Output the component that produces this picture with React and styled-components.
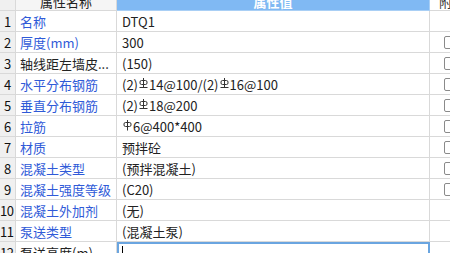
import React from "react";
import styled, { createGlobalStyle } from "styled-components";

const Global = createGlobalStyle`
  html, body { margin: 0; padding: 0; background: #fff; overflow: hidden; }
  body { font-family: "Noto Sans CJK SC", "Noto Sans", "Liberation Sans", sans-serif; }
`;

const Viewport = styled.div`
  width: 450px;
  height: 253px;
  overflow: hidden;
`;

const Table = styled.div`
  display: grid;
  grid-template-columns: 16px 101px 313px 40px;
  grid-auto-rows: 21px;
  width: 470px;
  margin-top: -10px;
  font-size: 13px;
`;

const HeadCell = styled.div`
  display: flex;
  align-items: center;
  justify-content: ${(p) => (p.$left ? "flex-start" : "center")};
  padding-left: ${(p) => (p.$left ? "9px" : "0")};
  background: ${(p) => p.$bg};
  color: ${(p) => p.$color};
  font-weight: ${(p) => (p.$bold ? 700 : 400)};
  border-right: 1px solid ${(p) => p.$line || "#d9d9d9"};
  border-bottom: 1px solid ${(p) => p.$line || "#d9d9d9"};
  box-sizing: border-box;
  line-height: 1;
  padding-top: 3px;
`;

const NumCell = styled.div`
  background: #f0f0f0;
  border-right: 1px solid #d9d9d9;
  border-bottom: 1px solid #d9d9d9;
  box-sizing: border-box;
  color: #111;
  display: flex;
  align-items: center;
  justify-content: ${(p) => (p.$wide ? "flex-start" : "center")};
  padding-left: ${(p) => (p.$wide ? "0" : "0")};
  letter-spacing: ${(p) => (p.$wide ? "-0.5px" : "0")};
  overflow: hidden;
`;

const NameCell = styled.div`
  border-right: 1px solid #d9d9d9;
  border-bottom: 1px solid #d9d9d9;
  box-sizing: border-box;
  padding-left: 4px;
  display: flex;
  align-items: center;
  color: ${(p) => (p.$blue ? "#2f5ad8" : "#222")};
  white-space: nowrap;
  overflow: hidden;
`;

const ValueCell = styled.div`
  border-right: 1px solid #d9d9d9;
  border-bottom: 1px solid #d9d9d9;
  box-sizing: border-box;
  padding-left: 5px;
  display: flex;
  align-items: center;
  color: #222;
  white-space: nowrap;
  overflow: hidden;
`;

const EditCell = styled.div`
  border: 2px solid #6aa5e0;
  box-sizing: border-box;
  padding-left: 3px;
  display: flex;
  align-items: flex-start;
  padding-top: 2px;
`;

const Caret = styled.span`
  width: 1px;
  height: 14px;
  background: #000;
`;

const CheckCell = styled.div`
  border-bottom: 1px solid #d9d9d9;
  box-sizing: border-box;
  padding-left: 14px;
  display: flex;
  align-items: center;
`;

const Box = styled.span`
  width: 13px;
  height: 13px;
  box-sizing: border-box;
  border: 1px solid #8a8a8a;
  border-radius: 2px;
  background: #fff;
`;

const BarIcon = styled.svg`
  width: 9px;
  height: 11px;
  margin: 0 1px;
  align-self: center;
  transform: translateY(-1px);
`;

const Rebar = ({ grade }) => (
  <BarIcon viewBox="0 0 9 11">
    <rect x="1" y="2.5" width="7" height="4" rx="1.5" fill="none" stroke="#333" strokeWidth="1" />
    <line x1="4.5" y1="0" x2="4.5" y2={grade === "C" ? "9" : "10.5"} stroke="#333" strokeWidth="1" />
    {grade === "C" && <line x1="0.5" y1="9.5" x2="8.5" y2="9.5" stroke="#333" strokeWidth="1" />}
  </BarIcon>
);

const rows = [
  { n: "1", name: "名称", blue: true, value: "DTQ1", check: false },
  { n: "2", name: "厚度(mm)", blue: true, value: "300", check: true },
  { n: "3", name: "轴线距左墙皮...", blue: false, value: "(150)", check: true },
  {
    n: "4", name: "水平分布钢筋", blue: true, check: true,
    value: (<>(2)<Rebar grade="C" />14@100/(2)<Rebar grade="C" />16@100</>),
  },
  { n: "5", name: "垂直分布钢筋", blue: true, check: true, value: (<>(2)<Rebar grade="C" />18@200</>) },
  { n: "6", name: "拉筋", blue: true, check: true, value: (<><Rebar grade="A" />6@400*400</>) },
  { n: "7", name: "材质", blue: true, value: "预拌砼", check: true },
  { n: "8", name: "混凝土类型", blue: true, value: "(预拌混凝土)", check: true },
  { n: "9", name: "混凝土强度等级", blue: true, value: "(C20)", check: true },
  { n: "10", name: "混凝土外加剂", blue: true, value: "(无)", check: false },
  { n: "11", name: "泵送类型", blue: true, value: "(混凝土泵)", check: false },
];

export default function App() {
  return (
    <Viewport>
      <Global />
      <Table>
        <HeadCell $bg="#f0f0f0" $color="#222" />
        <HeadCell $bg="#f5f5f5" $color="#222">属性名称</HeadCell>
        <HeadCell $bg="#80b9f3" $color="#fff" $bold $line="#a9cff5">属性值</HeadCell>
        <HeadCell $bg="#fff" $color="#333" $left $line="#d9d9d9">附加</HeadCell>
        {rows.map((r) => (
          <React.Fragment key={r.n}>
            <NumCell $wide={r.n.length > 1}>{r.n}</NumCell>
            <NameCell $blue={r.blue}>{r.name}</NameCell>
            <ValueCell>{r.value}</ValueCell>
            <CheckCell>{r.check && <Box />}</CheckCell>
          </React.Fragment>
        ))}
        <NumCell $wide>12</NumCell>
        <NameCell>泵送高度(m)</NameCell>
        <EditCell><Caret /></EditCell>
        <CheckCell />
      </Table>
    </Viewport>
  );
}
